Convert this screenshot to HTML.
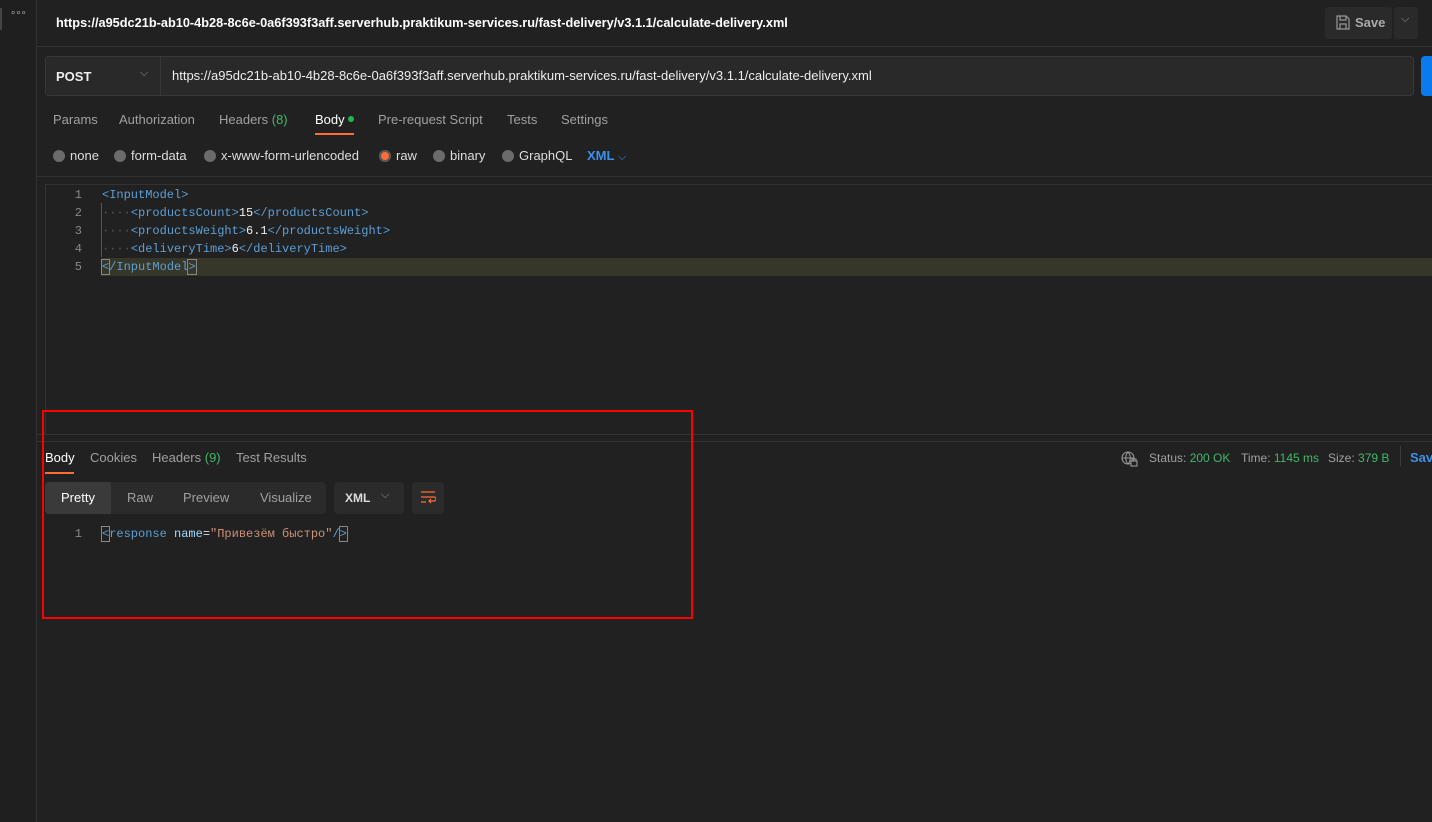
<!DOCTYPE html>
<html><head><meta charset="utf-8"><style>
*{margin:0;padding:0;box-sizing:border-box}
body{width:1432px;height:822px;background:#212121;font-family:"Liberation Sans",sans-serif;color:#c8c8c8;position:relative;overflow:hidden;font-size:13px}
.a{position:absolute;white-space:nowrap}
.mono{font-family:"Liberation Mono","DejaVu Sans Mono",monospace;font-size:12px}
.tag{color:#5c9fd6}.g{color:#3fb86b}.txt{color:#e8e8e8}.str{color:#ce9178}.attr{color:#9cdcfe}
.dot{display:inline-block;width:12px;height:12px;border-radius:50%;background:#6b6b6b;vertical-align:-2px;margin-right:5px}
</style></head><body>
<div class="a" style="left:0;top:0;width:37px;height:822px;background:#1f1f1f;border-right:1px solid #333"></div>
<div class="a" style="left:0;top:8px;width:2px;height:22px;background:#444"></div>
<div class="a" style="left:10px;top:8px;font-size:10px;color:#aaa;letter-spacing:-1px">∘∘∘</div>
<div class="a" style="left:37px;top:46px;width:1395px;height:1px;background:#333"></div>
<div class="a" style="left:56px;top:15px;font-weight:bold;color:#fff;font-size:12.75px">https://a95dc21b-ab10-4b28-8c6e-0a6f393f3aff.serverhub.praktikum-services.ru/fast-delivery/v3.1.1/calculate-delivery.xml</div>
<div class="a" style="left:1325px;top:7px;width:67px;height:32px;background:#2a2a2a;border-radius:3px"></div>
<svg class="a" style="left:1336px;top:15px" width="14" height="15" viewBox="0 0 14 15" fill="none" stroke="#999" stroke-width="1.2"><path d="M1 1h9l3 3v10H1z M4 1v4h6V1 M4 14V9h6v5"/></svg>
<div class="a" style="left:1355px;top:15px;color:#aaa;font-weight:bold">Save</div>
<div class="a" style="left:1394px;top:7px;width:24px;height:32px;background:#2a2a2a;border-radius:3px"></div>
<div class="a" style="left:1401px;top:13px;color:#999;font-size:11px">⌵</div>
<div class="a" style="left:45px;top:56px;width:1369px;height:40px;background:#292929;border:1px solid #383838;border-radius:4px"></div>
<div class="a" style="left:160px;top:57px;width:1px;height:38px;background:#383838"></div>
<div class="a" style="left:56px;top:69px;font-weight:bold;color:#eee">POST</div>
<div class="a" style="left:140px;top:67px;color:#999;font-size:11px">⌵</div>
<div class="a" style="left:172px;top:68px;color:#eee">https://a95dc21b-ab10-4b28-8c6e-0a6f393f3aff.serverhub.praktikum-services.ru/fast-delivery/v3.1.1/calculate-delivery.xml</div>
<div class="a" style="left:1421px;top:56px;width:14px;height:40px;background:#097bed;border-radius:4px"></div>
<div class="a" style="left:53px;top:112px;color:#a0a0a0">Params</div>
<div class="a" style="left:119px;top:112px;color:#a0a0a0">Authorization</div>
<div class="a" style="left:219px;top:112px;color:#a0a0a0">Headers <span class="g">(8)</span></div>
<div class="a" style="left:315px;top:112px;color:#fff">Body <span style="display:inline-block;width:6px;height:6px;border-radius:50%;background:#1fb84f;vertical-align:2px"></span></div>
<div class="a" style="left:315px;top:133px;width:39px;height:2px;background:#ff6c37"></div>
<div class="a" style="left:378px;top:112px;color:#a0a0a0">Pre-request Script</div>
<div class="a" style="left:507px;top:112px;color:#a0a0a0">Tests</div>
<div class="a" style="left:561px;top:112px;color:#a0a0a0">Settings</div>
<div class="a" style="left:53px;top:148px;color:#ddd"><span class="dot"></span>none</div>
<div class="a" style="left:114px;top:148px;color:#ddd"><span class="dot"></span>form-data</div>
<div class="a" style="left:204px;top:148px;color:#ddd"><span class="dot"></span>x-www-form-urlencoded</div>
<div class="a" style="left:379px;top:148px;color:#ddd"><span class="dot" style="background:#ff6c37;box-shadow:inset 0 0 0 2px #555"></span>raw</div>
<div class="a" style="left:433px;top:148px;color:#ddd"><span class="dot"></span>binary</div>
<div class="a" style="left:502px;top:148px;color:#ddd"><span class="dot"></span>GraphQL</div>
<div class="a" style="left:587px;top:148px;color:#3d8fe8;font-weight:bold">XML <span style="font-weight:normal;font-size:11px">⌵</span></div>
<div class="a" style="left:37px;top:176px;width:1395px;height:1px;background:#333"></div>
<div class="a" style="left:45px;top:184px;width:1387px;height:1px;background:#333"></div>
<div class="a" style="left:45px;top:184px;width:1px;height:250px;background:#333"></div>
<div class="a" style="left:101px;top:258px;width:1331px;height:18px;background:#363629"></div>
<div class="a" style="left:101px;top:203px;width:1px;height:54px;background:#555"></div>
<div class="a mono" style="left:60px;top:186px;line-height:18px;color:#888;text-align:right;width:22px">1<br>2<br>3<br>4<br>5</div>
<div class="a mono" style="left:102px;top:186px;line-height:18px;color:#eee"><span class="tag">&lt;InputModel&gt;</span><br><span style="color:#555">····</span><span class="tag">&lt;productsCount&gt;</span>15<span class="tag">&lt;/productsCount&gt;</span><br><span style="color:#555">····</span><span class="tag">&lt;productsWeight&gt;</span>6.1<span class="tag">&lt;/productsWeight&gt;</span><br><span style="color:#555">····</span><span class="tag">&lt;deliveryTime&gt;</span>6<span class="tag">&lt;/deliveryTime&gt;</span><br><span class="tag" style="outline:1px solid #888">&lt;</span><span class="tag">/InputModel</span><span class="tag" style="outline:1px solid #888">&gt;</span><span style="border-left:1px solid #fff"></span></div>
<div class="a" style="left:37px;top:434px;width:1395px;height:1px;background:#333"></div>
<div class="a" style="left:37px;top:441px;width:1395px;height:1px;background:#333"></div>
<div class="a" style="left:45px;top:450px;color:#fff">Body</div>
<div class="a" style="left:45px;top:472px;width:29px;height:2px;background:#ff6c37"></div>
<div class="a" style="left:90px;top:450px;color:#a0a0a0">Cookies</div>
<div class="a" style="left:152px;top:450px;color:#a0a0a0">Headers <span class="g">(9)</span></div>
<div class="a" style="left:236px;top:450px;color:#a0a0a0">Test Results</div>
<svg class="a" style="left:1121px;top:451px" width="17" height="16" viewBox="0 0 17 16" fill="none" stroke="#999" stroke-width="1.1"><circle cx="7" cy="7" r="6"/><path d="M1 7h12M7 1c-3 3-3 9 0 12M7 1c3 3 3 9 0 12"/><rect x="10" y="10" width="6" height="5" fill="#212121"/><path d="M11 10v-2h4v2"/></svg>
<div class="a" style="left:1149px;top:451px;color:#a0a0a0;font-size:12px">Status: <span class="g">200 OK</span></div>
<div class="a" style="left:1241px;top:451px;color:#a0a0a0;font-size:12px">Time: <span class="g">1145 ms</span></div>
<div class="a" style="left:1328px;top:451px;color:#a0a0a0;font-size:12px">Size: <span class="g">379 B</span></div>
<div class="a" style="left:1400px;top:446px;width:1px;height:20px;background:#3a3a3a"></div>
<div class="a" style="left:1410px;top:450px;color:#3d8fe8;font-weight:bold">Sav</div>
<div class="a" style="left:45px;top:482px;width:281px;height:32px;background:#2b2b2b;border-radius:4px"></div>
<div class="a" style="left:45px;top:482px;width:66px;height:32px;background:#3a3a3a;border-radius:4px 0 0 4px"></div>
<div class="a" style="left:61px;top:490px;color:#fff">Pretty</div>
<div class="a" style="left:127px;top:490px;color:#a0a0a0">Raw</div>
<div class="a" style="left:183px;top:490px;color:#a0a0a0">Preview</div>
<div class="a" style="left:260px;top:490px;color:#a0a0a0">Visualize</div>
<div class="a" style="left:334px;top:482px;width:70px;height:32px;background:#2b2b2b;border-radius:4px"></div>
<div class="a" style="left:345px;top:491px;color:#ddd;font-weight:bold;font-size:12px">XML</div>
<div class="a" style="left:381px;top:489px;color:#999;font-size:11px">⌵</div>
<div class="a" style="left:412px;top:482px;width:32px;height:32px;background:#2b2b2b;border-radius:4px"></div>
<svg class="a" style="left:420px;top:490px" width="16" height="16" viewBox="0 0 16 16" fill="none" stroke="#ff6c37" stroke-width="1.2"><path d="M1 2h14M1 7h13a2 2 0 010 4H9M11 9l-2 2 2 2M1 12h5"/></svg>
<div class="a mono" style="left:60px;top:525px;line-height:18px;color:#888;width:22px;text-align:right">1</div>
<div class="a mono" style="left:102px;top:525px;line-height:18px"><span class="tag" style="outline:1px solid #888">&lt;</span><span class="tag">response</span> <span class="attr">name</span><span style="color:#ddd">=</span><span class="str">"Привезём быстро"</span><span class="tag">/</span><span class="tag" style="outline:1px solid #888">&gt;</span></div>
<div class="a" style="left:42px;top:410px;width:651px;height:209px;border:2px solid #f00"></div>
</body></html>
